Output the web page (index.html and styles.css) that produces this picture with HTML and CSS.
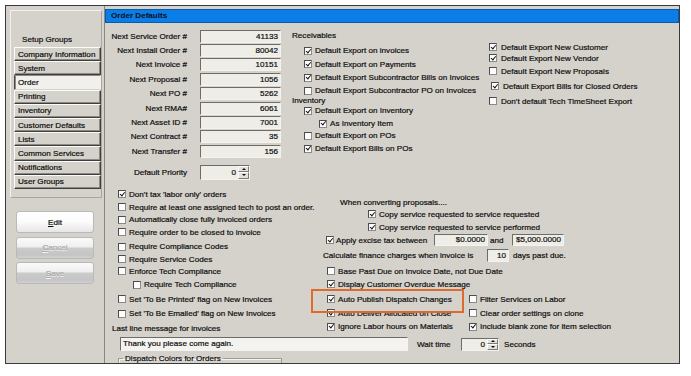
FILE: index.html
```
<!DOCTYPE html>
<html>
<head>
<meta charset="utf-8">
<link rel="stylesheet" href="styles.css">
</head>
<body>
<div class="frame">
  <aside class="side">
    <div class="groups">
      <div class="gtitle">Setup Groups</div>
      <div class="glist">
        <div class="gitem">Company Information</div>
        <div class="gitem">System</div>
        <div class="gitem sel">Order</div>
        <div class="gitem">Printing</div>
        <div class="gitem">Inventory</div>
        <div class="gitem">Customer Defaults</div>
        <div class="gitem">Lists</div>
        <div class="gitem">Common Services</div>
        <div class="gitem">Notifications</div>
        <div class="gitem">User Groups</div>
      </div>
    </div>
    <div class="btns">
      <div class="btn"><u>E</u>dit</div>
      <div class="btn dis"><u>C</u>ancel</div>
      <div class="btn dis"><u>S</u>ave</div>
    </div>
  </aside>
  <main class="main">
    <div class="hdr">Order Defaults</div>
    <div class="top">
      <div class="form">
        <div class="frow"><span class="flabel">Next Service Order #</span><span class="fin">41133</span></div>
        <div class="frow"><span class="flabel">Next Install Order #</span><span class="fin">80042</span></div>
        <div class="frow"><span class="flabel">Next Invoice #</span><span class="fin">10151</span></div>
        <div class="frow"><span class="flabel">Next Proposal #</span><span class="fin">1056</span></div>
        <div class="frow"><span class="flabel">Next PO #</span><span class="fin">5262</span></div>
        <div class="frow"><span class="flabel">Next RMA#</span><span class="fin">6061</span></div>
        <div class="frow"><span class="flabel">Next Asset ID #</span><span class="fin">7001</span></div>
        <div class="frow"><span class="flabel">Next Contract #</span><span class="fin">35</span></div>
        <div class="frow"><span class="flabel">Next Transfer #</span><span class="fin">156</span></div>
        <div class="frow prow"><span class="flabel">Default Priority</span><span class="fin pri"><span class="v">0</span><span class="spin"><span class="up"></span><span class="dn"></span></span></span></div>
      </div>
      <div class="recv">
        <div class="lbl">Receivables</div>
        <div class="cbr"><i class="cb on"></i>Default Export on invoices</div>
        <div class="cbr"><i class="cb on"></i>Default Export on Payments</div>
        <div class="cbr"><i class="cb on"></i>Default Export Subcontractor Bills on Invoices</div>
        <div class="cbr"><i class="cb"></i>Default Export Subcontractor PO on Invoices</div>
        <div class="lbl">Inventory</div>
        <div class="cbr"><i class="cb on"></i>Default Export on Inventory</div>
        <div class="cbr sub"><i class="cb on"></i>As Inventory Item</div>
        <div class="cbr"><i class="cb"></i>Default Export on POs</div>
        <div class="cbr"><i class="cb on"></i>Default Export Bills on POs</div>
      </div>
      <div class="rcol">
        <div class="cbr"><i class="cb on"></i>Default Export New Customer</div>
        <div class="cbr"><i class="cb on"></i>Default Export New Vendor</div>
        <div class="cbr"><i class="cb"></i>Default Export New Proposals</div>
        <div class="cbr sh"><i class="cb on"></i>Default Export Bills for Closed Orders</div>
        <div class="cbr"><i class="cb"></i>Don't default Tech TimeSheet Export</div>
      </div>
    </div>
    <div class="lower">
      <div class="lcol">
        <div class="ga">
          <div class="cbr"><i class="cb on"></i>Don't tax 'labor only' orders</div>
          <div class="cbr"><i class="cb"></i>Require at least one assigned tech to post an order.</div>
          <div class="cbr"><i class="cb"></i>Automatically close fully invoiced orders</div>
          <div class="cbr"><i class="cb"></i>Require order to be closed to invoice</div>
        </div>
        <div class="gb">
          <div class="cbr"><i class="cb"></i>Require Compliance Codes</div>
          <div class="cbr"><i class="cb"></i>Require Service Codes</div>
          <div class="cbr"><i class="cb"></i>Enforce Tech Compliance</div>
        </div>
        <div class="gc">
          <div class="cbr ind"><i class="cb"></i>Require Tech Compliance</div>
          <div class="cbr"><i class="cb"></i>Set 'To Be Printed' flag on New Invoices</div>
          <div class="cbr"><i class="cb"></i>Set 'To Be Emailed' flag on New Invoices</div>
          <div class="lastlbl">Last line message for invoices</div>
        </div>
      </div>
      <div class="rlow">
        <div class="rr conv">When converting proposals....</div>
        <div class="rr copy"><i class="cb on"></i>Copy service requested to service requested</div>
        <div class="rr copy h14"><i class="cb on"></i>Copy service requested to service performed</div>
        <div class="rr apply"><i class="cb on"></i><span class="atxt">Apply excise tax between</span><span class="fin tin w54">$0.0000</span><span class="and">and</span><span class="fin tin w52">$5,000.0000</span></div>
        <div class="rr calc"><span class="ctxt">Calculate finance charges when invoice is</span><span class="fin cin">10</span><span class="days">days past due.</span></div>
        <div class="rr opt base"><i class="cb"></i>Base Past Due on Invoice Date, not Due Date</div>
        <div class="rr opt h14"><i class="cb on"></i>Display Customer Overdue Message</div>
        <div class="rr opt h14 pub"><span class="a"><i class="cb on"></i>Auto Publish Dispatch Changes</span><i class="cb"></i>Filter Services on Labor</div>
        <div class="rr opt h14"><span class="a"><i class="cb on"></i>Auto Deliver Allocated on Close</span><i class="cb"></i>Clear order settings on clone</div>
        <div class="rr opt h13"><span class="a"><i class="cb on"></i>Ignore Labor hours on Materials</span><i class="cb on"></i>Include blank zone for item selection</div>
      </div>
    </div>
    <div class="bottom">
      <span class="msg">Thank you please come again.</span>
      <span class="wt">Wait time</span>
      <span class="fin win"><span class="v">0</span><span class="spin"><span class="up"></span><span class="dn"></span></span></span>
      <span class="sec">Seconds</span>
    </div>
    <fieldset class="disp"><legend>Dispatch Colors for Orders</legend></fieldset>
  </main>
</div>
<div class="hilite"></div>
</body>
</html>
```

FILE: styles.css
```
* { box-sizing: border-box; }
body {
  margin: 0;
  background: #ffffff;
  font-family: "Liberation Sans", Arial, sans-serif;
  font-size: 8.1px;
  color: #0c0c0c;
  -webkit-text-stroke: 0.2px currentColor;
}
.frame {
  box-sizing: content-box;
  margin: 5px 0 0 5px;
  width: 673px;
  height: 357px;
  border: 1px solid #3a3a3a;
  display: flex;
  background: #d5d2cb;
  overflow: hidden;
}
/* sidebar */
.side {
  width: 99px;
  flex: none;
  border-right: 1px solid #8a8782;
}
.groups {
  margin: 4px 0 0 4px;
  width: 92px;
  height: 188px;
  border: 1px solid;
  border-color: #f3f2ee #a9a69f #a9a69f #f3f2ee;
}
.gtitle {
  height: 36px;
  padding: 23px 0 0 11px;
  line-height: 12px;
}
.glist {
  margin-left: 3px;
  width: 87px;
}
.gitem {
  height: 14.2px;
  display: flex;
  align-items: center;
  padding-left: 3px;
  white-space: nowrap;
  border-top: 1px solid #fbfbf9;
  border-left: 1px solid #fbfbf9;
  border-right: 1px solid #3f3f3f;
  border-bottom: 1px solid #3f3f3f;
  box-shadow: inset -1px -1px #8d8a84;
}
.gitem.sel {
  background: #f1f0ec;
  border-color: #8d8a84 #f1f0ec #d5d2cb #4a4a4a;
  box-shadow: inset 1px 0 #8d8a84;
}
.btns {
  margin: 13px 0 0 10px;
  width: 78px;
  display: flex;
  flex-direction: column;
  gap: 3.5px;
}
.btn {
  height: 22px;
  border: 1px solid #b9b9b9;
  border-radius: 3px;
  display: flex;
  align-items: center;
  justify-content: center;
  background: linear-gradient(#ffffff 0%, #fbfbfb 50%, #e6e6e6 100%);
}
.btn u { text-decoration: underline; }
.btn.dis {
  color: #ababab;
  background: linear-gradient(#fafafa 0%, #efefef 45%, #cbcbcb 50%, #c4c4c4 85%, #d2d2d2 100%);
  text-shadow: 0 1px 0 #f4f4f4;
}
/* main */
.main {
  width: 574px;
  flex: none;
  padding-top: 3px;
  overflow: hidden;
}
.hdr {
  height: 14px;
  background: #0a7de6;
  border: 1px solid #0a5aae;
  line-height: 12px;
  padding-left: 5px;
  font-weight: bold;
  color: #0b0f1a;
  -webkit-text-stroke: 0;
}
.top {
  display: flex;
  height: 163px;
}
.form {
  width: 185px;
  flex: none;
  padding-top: 6px;
}
.frow {
  display: flex;
  align-items: center;
  height: 14.4px;
}
.flabel {
  width: 82px;
  margin-right: 13px;
  text-align: right;
  white-space: nowrap;
  flex: none;
}
.fin {
  flex: none;
  display: inline-block;
  width: 81px;
  height: 13px;
  line-height: 11px;
  text-align: right;
  padding-right: 2px;
  background: #eeede7;
  border: 1px solid;
  border-color: #6e6c68 #f4f3ef #f4f3ef #6e6c68;
  white-space: nowrap;
}
.prow {
  margin-top: 6px;
  height: 15px;
}
.fin.pri {
  width: 50px;
  height: 15px;
  display: flex;
  align-items: center;
  justify-content: flex-end;
  padding-right: 0;
}
.v { margin-right: 2px; }
.spin {
  width: 11px;
  align-self: stretch;
  display: flex;
  flex-direction: column;
}
.spin span {
  flex: 1;
  display: flex;
  align-items: center;
  justify-content: center;
  background: #e3e1db;
  border: 1px solid;
  border-color: #ffffff #7d7b77 #7d7b77 #ffffff;
}
.spin span::after {
  content: "";
  border-left: 2px solid transparent;
  border-right: 2px solid transparent;
}
.spin .up::after { border-bottom: 2px solid #111; }
.spin .dn::after { border-top: 2px solid #111; }

.cbr {
  display: flex;
  align-items: center;
  white-space: nowrap;
}
.cb {
  display: inline-block;
  flex: none;
  width: 8px;
  height: 8px;
  border: 1px solid;
  border-color: #4c4c4c #8a8a8a #8a8a8a #4c4c4c;
  background: #fdfdfd;
  margin-right: 3px;
  position: relative;
}
.cb.on::after {
  content: "";
  position: absolute;
  left: 1.7px;
  top: -0.4px;
  width: 1.8px;
  height: 3.8px;
  border: solid #111;
  border-width: 0 1.4px 1.4px 0;
  transform: rotate(40deg);
}
.recv {
  width: 195px;
  flex: none;
  padding-top: 4.67px;
  display: grid;
  grid-template-rows: 16.67px 13.33px 13.33px 13.33px 13.33px 6.67px 13.33px 12px 12.7px 13px;
  align-content: start;
}
.recv > div {
  display: flex;
  align-items: center;
  white-space: nowrap;
}
.recv .lbl { padding-left: 2px; }
.recv .cbr { padding-left: 14px; }
.recv .cbr.sub { padding-left: 29px; }
.rcol {
  flex: 1;
  padding-top: 18.5px;
  padding-left: 4px;
  display: grid;
  grid-template-rows: 11px 11px 15px 15px 15px;
  align-content: start;
}
.rcol .cbr .cb { margin-right: 4px; }
.rcol .cbr.sh { padding-left: 2px; }
/* lower */
.lower {
  display: flex;
  height: 151px;
}
.lcol {
  width: 215px;
  flex: none;
  padding: 2px 0 0 7px;
}
.lcol .cbr { padding-left: 6px; }
.lcol .cbr.ind { padding-left: 21px; }
.ga > div { height: 12.7px; }
.gb { margin-top: 2px; }
.gb > div { height: 12.2px; }
.gc > div { height: 14.5px; }
.lastlbl {
  display: flex;
  align-items: center;
  white-space: nowrap;
}
.rlow {
  flex: 1;
  padding-top: 10px;
}
.rr {
  display: flex;
  align-items: center;
  white-space: nowrap;
  height: 12px;
}
.rr.h14 { height: 14px; }
.rr.h13 { height: 13px; }
.conv { padding-left: 20px; }
.copy { padding-left: 48px; }
.apply { padding-left: 6px; }
.apply .cb { margin-right: 2px; }
.atxt { width: 98px; flex: none; }
.tin { height: 12px; line-height: 10px; }
.w54 { width: 54px; }
.w52 { width: 52px; }
.and { width: 24px; padding-left: 2px; flex: none; }
.calc {
  margin-top: 2px;
  height: 14px;
  padding-left: 3px;
}
.ctxt { width: 164px; flex: none; }
.cin { width: 22px; height: 13px; }
.days { margin-left: 4px; }
.opt { padding-left: 7px; }
.base { margin-top: 3px; }
.pub { margin-top: 1px; }
.opt .a {
  width: 142px;
  flex: none;
  display: flex;
  align-items: center;
}
/* bottom */
.bottom {
  display: flex;
  align-items: center;
  height: 14px;
  padding-left: 15px;
  white-space: nowrap;
}
.msg {
  width: 288px;
  height: 14px;
  line-height: 12px;
  padding-left: 2px;
  background: #f4f3ef;
  border: 1px solid;
  border-color: #6e6c68 #f4f3ef #f4f3ef #6e6c68;
  flex: none;
}
.wt {
  width: 44px;
  margin-left: 9px;
  flex: none;
}
.fin.win {
  width: 38px;
  height: 13px;
  display: flex;
  align-items: center;
  justify-content: flex-end;
  padding-right: 0;
}
.sec { margin-left: 5px; }
.disp {
  margin: 3px 0 0 13px;
  width: 164px;
  height: 24px;
  padding: 0 4px;
  border: 1px solid #a09d96;
  box-shadow: inset 1px 1px #f4f3ef;
}
.disp legend {
  padding: 0 2px;
  line-height: 9px;
  font-size: 8.1px;
}
.hilite {
  position: absolute;
  left: 311px;
  top: 289px;
  width: 153px;
  height: 24px;
  border: 2px solid #de6a2d;
}
```
